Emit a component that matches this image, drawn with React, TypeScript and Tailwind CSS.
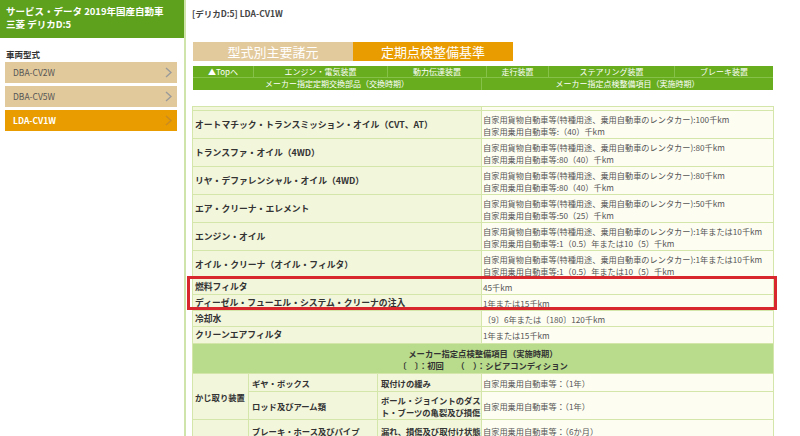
import React from 'react';

const jp = { fontFamily: '"Noto Sans CJK JP", "Noto Sans", sans-serif' };

const models = [
  { name: 'DBA-CV2W', active: false },
  { name: 'DBA-CV5W', active: false },
  { name: 'LDA-CV1W', active: true },
];

const navTop = [
  { label: '▲Topへ', w: 'w-[61px]' },
  { label: 'エンジン・電気装置', w: 'w-[134px]' },
  { label: '動力伝達装置', w: 'w-[99px]' },
  { label: '走行装置', w: 'w-[62px]' },
  { label: 'ステアリング装置', w: 'w-[126px]' },
  { label: 'ブレーキ装置', w: 'flex-1' },
];

const cargo = '自家用貨物自動車等(特種用途、乗用自動車のレンタカー):';

const parts: { name: string; lines: string[] }[] = [
  { name: 'オートマチック・トランスミッション・オイル（CVT、AT）', lines: [cargo + '100千km', '自家用乗用自動車等:（40）千km'] },
  { name: 'トランスファ・オイル（4WD）', lines: [cargo + '80千km', '自家用乗用自動車等:80（40）千km'] },
  { name: 'リヤ・デファレンシャル・オイル（4WD）', lines: [cargo + '80千km', '自家用乗用自動車等:80（40）千km'] },
  { name: 'エア・クリーナ・エレメント', lines: [cargo + '50千km', '自家用乗用自動車等:50（25）千km'] },
  { name: 'エンジン・オイル', lines: [cargo + '1年または10千km', '自家用乗用自動車等:1（0.5）年または10（5）千km'] },
  { name: 'オイル・クリーナ（オイル・フィルタ）', lines: [cargo + '1年または10千km', '自家用乗用自動車等:1（0.5）年または10（5）千km'] },
];

const singles = [
  { name: '燃料フィルタ', value: '45千km', h: 'h-[15px]' },
  { name: 'ディーゼル・フューエル・システム・クリーナの注入', value: '1年または15千km', h: 'h-[15px]' },
  { name: '冷却水', value: '〔9〕6年または〔180〕120千km', h: 'h-[15px]' },
  { name: 'クリーンエアフィルタ', value: '1年または15千km', h: 'h-[16px]' },
];

const Chevron = ({ active }: { active: boolean }) => (
  <svg width="7" height="11" viewBox="0 0 7 11" fill="none">
    <polyline points="1,1 6,5.5 1,10" stroke={active ? '#c98b22' : '#9a9a9a'} strokeWidth="1.4" />
  </svg>
);

const Sidebar = () => (
  <aside className="w-[184px] shrink-0 flex flex-col">
    <div className="h-[38px] bg-[#5da11d] pl-[6px] pt-[5px] text-white text-[9.5px] font-bold">
      <div className="h-[13px] leading-[13px]">サービス・データ 2019年国産自動車</div>
      <div className="h-[13px] leading-[13px]">三菱 デリカD:5</div>
    </div>
    <div className="pl-[6px] pt-[11px] text-[8.5px] font-bold text-[#333] leading-[10px]">車両型式</div>
    <div className="flex flex-col gap-[3px] pl-[5px] pr-[7px] pt-[3px]">
      {models.map((m) => (
        <div
          key={m.name}
          className={`h-[21px] flex items-center justify-between pl-[8px] pr-[5px] text-[8.5px] ${
            m.active ? 'bg-[#e89c00] text-white font-bold' : 'bg-[#e2c99b] text-[#555]'
          }`}
        >
          <span>{m.name}</span>
          <Chevron active={m.active} />
        </div>
      ))}
    </div>
  </aside>
);

const Cell = ({ className = '', children }: { className?: string; children?: React.ReactNode }) => (
  <div className={`flex items-center ${className}`}>{children}</div>
);

export default function App() {
  return (
    <div className="w-[800px] h-[436px] overflow-hidden bg-white flex" style={jp}>
      <Sidebar />
      <main className="flex-1 border-l-2 border-[#cfe4ab] pl-[6px]">
        <div className="pt-[8px] h-[42px] text-[8.5px] font-bold text-[#444] leading-[10px]">[デリカD:5] LDA-CV1W</div>

        {/* tabs */}
        <div className="flex h-[19px] pl-px text-[13px] text-white leading-[19px]">
          <div className="w-[160px] bg-[#e3ca9c] text-center">型式別主要諸元</div>
          <div className="w-[160px] bg-[#e99c00] text-center">定期点検整備基準</div>
        </div>

        {/* section nav */}
        <div className="mt-[5px] ml-px w-[580px] bg-[#67ad1e] text-white text-[8px] leading-[12px]">
          <div className="flex h-[12px] border-b border-[#86c24a]">
            {navTop.map((n, i) => (
              <div key={n.label} className={`${n.w} text-center ${i < navTop.length - 1 ? 'border-r border-[#86c24a]' : ''}`}>
                {n.label}
              </div>
            ))}
          </div>
          <div className="flex h-[12px]">
            <div className="w-[289px] text-center border-r border-[#86c24a]">メーカー指定定期交換部品（交換時期）</div>
            <div className="flex-1 text-center">メーカー指定点検整備項目（実施時期）</div>
          </div>
        </div>

        {/* inspection table */}
        <div className="relative mt-[16px]">
          <div className="w-[582px] bg-[#d4e6aa] p-px flex flex-col gap-px text-[8.2px] leading-[12px]">
            <div className="grid grid-cols-[288px_1fr] gap-px">
              <div className="h-[3px] bg-[#f2f6db]" />
              <div className="h-[3px] bg-[#fdfdf2]" />
              {parts.map((p) => (
                <React.Fragment key={p.name}>
                  <Cell className="h-[27px] bg-[#f2f6db] pl-[2px] text-[8.8px] font-bold text-[#333] whitespace-nowrap">{p.name}</Cell>
                  <div className="h-[27px] bg-[#fdfdf2] pl-[1px] text-[#555] whitespace-nowrap flex flex-col justify-center">
                    {p.lines.map((l, i) => (
                      <div key={i}>{l}</div>
                    ))}
                  </div>
                </React.Fragment>
              ))}
              {singles.map((s) => (
                <React.Fragment key={s.name}>
                  <Cell className={`${s.h} bg-[#f2f6db] pl-[2px] text-[8.8px] font-bold text-[#333] whitespace-nowrap`}>{s.name}</Cell>
                  <Cell className={`${s.h} bg-[#fdfdf2] pl-[1px] text-[#555] whitespace-nowrap`}>{s.value}</Cell>
                </React.Fragment>
              ))}
            </div>

            <div className="h-[29px] bg-[#b8db8c] flex flex-col items-center justify-center text-[8.3px] font-bold text-[#333] leading-[12px]">
              <div>メーカー指定点検整備項目（実施時期）</div>
              <div className="whitespace-pre">〔　〕：初回　　（　）：シビアコンディション</div>
            </div>

            <div className="grid grid-cols-[55px_128px_103px_1fr] grid-rows-[17px_27px_22px] gap-px text-[8.3px] font-bold text-[#333]">
              <Cell className="row-span-2 bg-[#f2f6db] pl-[2px] whitespace-nowrap">かじ取り装置</Cell>
              <Cell className="bg-[#f2f6db] pl-[3px]">ギヤ・ボックス</Cell>
              <Cell className="bg-[#f2f6db] pl-[3px]">取付けの緩み</Cell>
              <Cell className="bg-[#fdfdf2] pl-[1px] text-[8.2px] font-normal text-[#555]">自家用乗用自動車等：（1年）</Cell>
              <Cell className="bg-[#f2f6db] pl-[3px]">ロッド及びアーム類</Cell>
              <div className="bg-[#f2f6db] pl-[3px] flex flex-col justify-center whitespace-nowrap">
                <div>ボール・ジョイントのダス</div>
                <div>ト・ブーツの亀裂及び損傷</div>
              </div>
              <Cell className="bg-[#fdfdf2] pl-[1px] text-[8.2px] font-normal text-[#555]">自家用乗用自動車等：（1年）</Cell>
              <div className="bg-[#f2f6db]" />
              <Cell className="bg-[#f2f6db] pl-[3px] whitespace-nowrap">ブレーキ・ホース及びパイプ</Cell>
              <Cell className="bg-[#f2f6db] pl-[3px] whitespace-nowrap">漏れ、損傷及び取付け状態</Cell>
              <Cell className="bg-[#fdfdf2] pl-[1px] text-[8.2px] font-normal text-[#555]">自家用乗用自動車等：（6か月）</Cell>
            </div>
          </div>

          {/* highlight around the fuel filter rows */}
          <div className="absolute left-[-5px] top-[170px] w-[590px] h-[34px] border-[3px] border-[#d9282d] pointer-events-none" />
        </div>
      </main>
    </div>
  );
}
